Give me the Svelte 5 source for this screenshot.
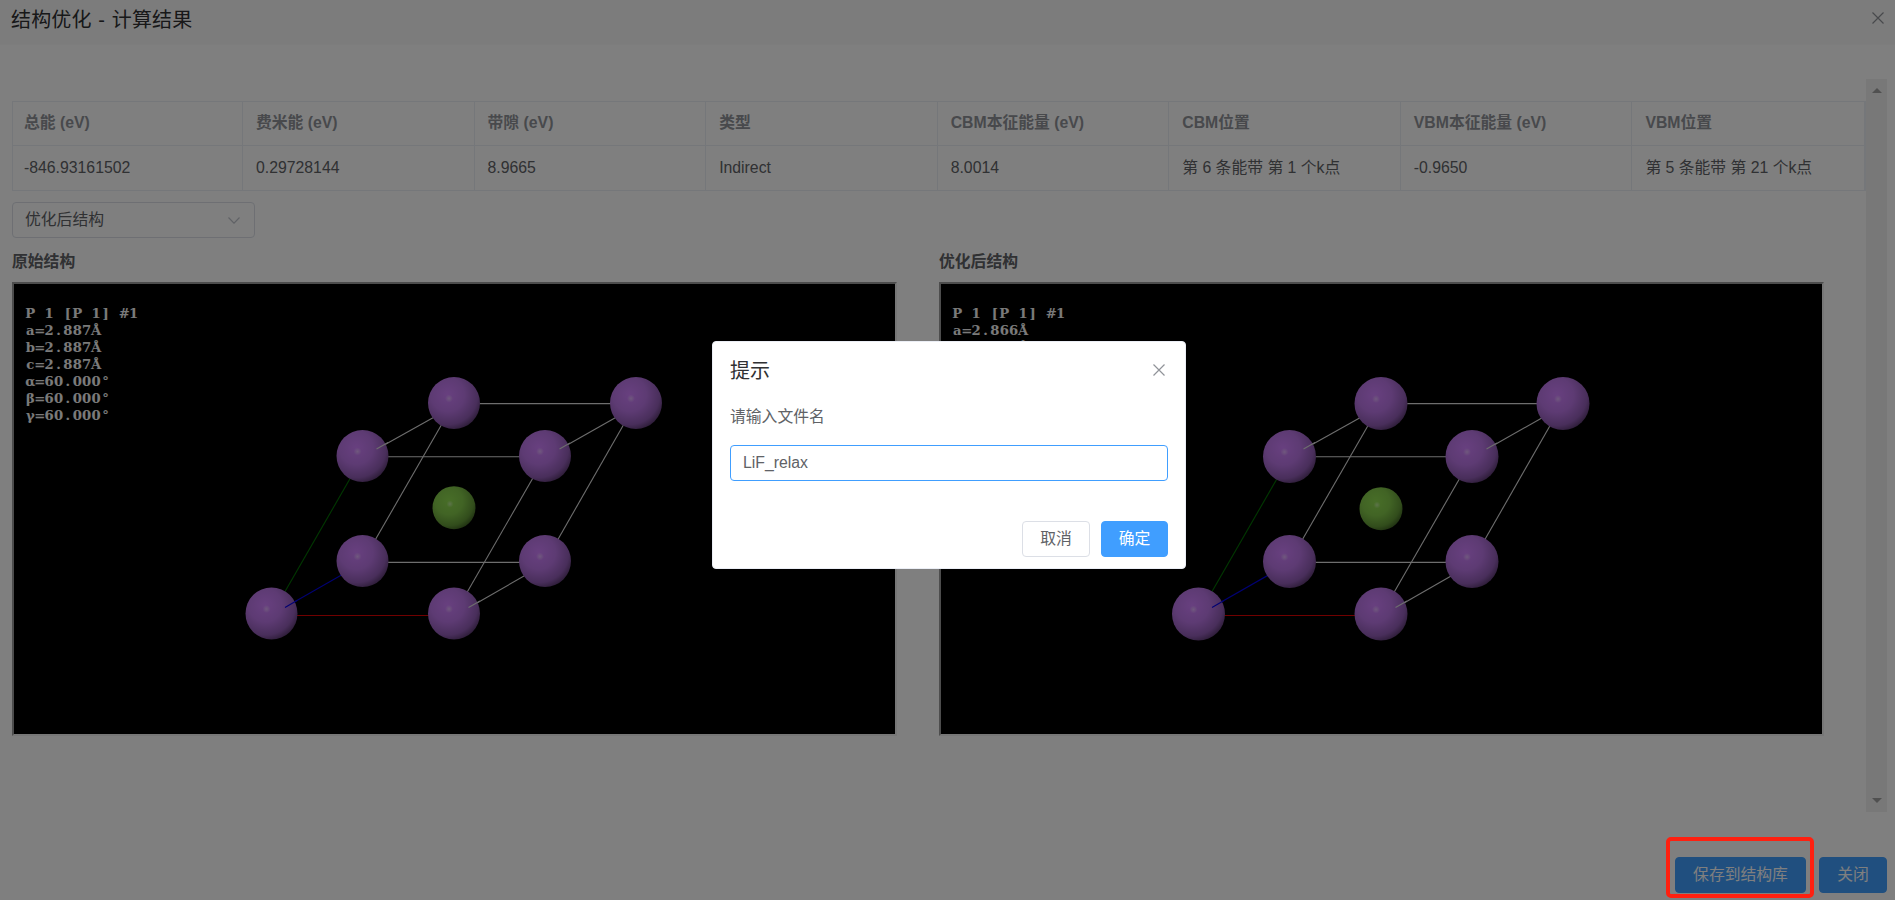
<script>
  const columns = [
    ['总能 (eV)', '-846.93161502'],
    ['费米能 (eV)', '0.29728144'],
    ['带隙 (eV)', '8.9665'],
    ['类型', 'Indirect'],
    ['CBM本征能量 (eV)', '8.0014'],
    ['CBM位置', '第 6 条能带 第 1 个k点'],
    ['VBM本征能量 (eV)', '-0.9650'],
    ['VBM位置', '第 5 条能带 第 21 个k点'],
  ];

  const viewers = [
    { title: '原始结构', length: '2.887', r: 26, dy: 0 },
    { title: '优化后结构', length: '2.866', r: 26.5, dy: 0.5 },
  ];

  const cellInfo = (length) => [
    'P 1 [P 1] #1',
    `a=${length}Å`,
    `b=${length}Å`,
    `c=${length}Å`,
    'α=60.000°',
    'β=60.000°',
    'γ=60.000°',
  ];

  // Centre of every character cell, for fixed-pitch lettering.
  const pitch = (line) => [...line].map((_, i) => (16.3 + i * 9.4).toFixed(1)).join(' ');

  // Corner atoms, in viewer coordinates.
  const atoms = [
    [440, 119], [622, 119], [348.5, 172], [531, 172],
    [348.5, 277], [531, 277], [257.5, 329.5], [440, 329.5],
  ];
  const backEdges = [
    [440, 119.6, 622, 119.6], [348.5, 172.7, 531, 172.7],
    [348.5, 278.4, 531, 278.4],
    [440, 119, 348.5, 278], [622, 119, 531, 278],
    [531, 173, 440, 331],
    [364, 164.5, 440, 122], [547, 164.5, 622, 122], [456, 323, 531, 280],
  ];

  let fileName = $state('LiF_relax');
</script>

<div class="page">
  <header>
    <h1>结构优化 - 计算结果</h1>
    <svg class="close" viewBox="0 0 12 12"><path d="M.5.5l11 11M11.5.5l-11 11" /></svg>
  </header>
  <main>
    <div class="content">
      <table>
        <thead><tr>{#each columns as c}<th>{c[0]}</th>{/each}</tr></thead>
        <tbody><tr>{#each columns as c}<td>{c[1]}</td>{/each}</tr></tbody>
      </table>
      <div class="select">
        <span>优化后结构</span>
        <svg viewBox="0 0 12 7"><path d="M.5.5L6 6.2 11.5.5" /></svg>
      </div>
      <div class="viewers">
        {#each viewers as v, i}
          <section>
            <h2>{v.title}</h2>
            <div class="frame">
              <svg class="scene" viewBox="0 0 881 450">
                <defs>
                  <radialGradient id="li{i}" cx=".38" cy=".34" r=".72">
                    <stop offset="0" stop-color="#d080ff" />
                    <stop offset=".45" stop-color="#bb76e7" />
                    <stop offset=".8" stop-color="#925db6" />
                    <stop offset="1" stop-color="#553669" />
                  </radialGradient>
                  <radialGradient id="f{i}" cx=".38" cy=".34" r=".72">
                    <stop offset="0" stop-color="#90dc50" />
                    <stop offset=".45" stop-color="#83c84a" />
                    <stop offset=".8" stop-color="#649a38" />
                    <stop offset="1" stop-color="#3c5d22" />
                  </radialGradient>
                  <radialGradient id="shine{i}">
                    <stop offset="0" stop-color="#fff" stop-opacity=".4" />
                    <stop offset="1" stop-color="#fff" stop-opacity="0" />
                  </radialGradient>
                </defs>
                <g class="info">
                  {#each cellInfo(v.length) as line, n}
                    <text x={pitch(line)} y={34.3 + n * 16.9}>{line}</text>
                  {/each}
                </g>
                <g class="edges">
                  {#each backEdges as e}<line x1={e[0]} y1={e[1]} x2={e[2]} y2={e[3]} />{/each}
                  <line class="green" x1="257.5" y1="331" x2="348.5" y2="173" />
                  <line class="red" x1="257.5" y1="331.5" x2="440" y2="331.5" />
                  <line class="blue" x1="257.5" y1="331" x2="348.5" y2="279" />
                </g>
                <g transform="translate(0 {v.dy})">
                  {#each atoms as a}
                    <circle cx={a[0]} cy={a[1]} r={v.r} fill="url(#li{i})" />
                    <circle cx={a[0] - 5} cy={a[1] - 4.5} r="4" fill="url(#shine{i})" />
                  {/each}
                  <circle cx="440" cy={223.7 + v.dy} r="21.5" fill="url(#f{i})" />
                  <circle cx="436" cy={220 + v.dy} r="3.5" fill="url(#shine{i})" />
                </g>
                <g class="edges">
                  <line x1="362.5" y1="165" x2="374" y2="158.5" />
                  <line x1="545.5" y1="165" x2="556" y2="159" />
                  <line x1="454.5" y1="323.5" x2="466" y2="317" />
                  <line class="blue" x1="271" y1="323.5" x2="283" y2="316.5" />
                </g>
              </svg>
            </div>
          </section>
        {/each}
      </div>
    </div>
    <div class="scrollbar"><i class="up"></i><i class="down"></i></div>
  </main>
  <footer>
    <button class="primary save">保存到结构库</button>
    <button class="primary">关闭</button>
  </footer>
</div>

<div class="mask">
  <div class="dialog">
    <div class="head">
      <h3>提示</h3>
      <svg class="close" viewBox="0 0 12 12"><path d="M.5.5l11 11M11.5.5l-11 11" /></svg>
    </div>
    <p>请输入文件名</p>
    <input bind:value={fileName} />
    <div class="actions">
      <button>取消</button>
      <button class="primary confirm">确定</button>
    </div>
  </div>
</div>
<div class="highlight"></div>

<style>
  :global(body) {
    font: 15.8px/24px "Liberation Sans", "Noto Sans CJK SC", sans-serif;
    color: #606266;
    overflow: hidden;
  }
  * { box-sizing: border-box; margin: 0; }
  .page { height: 900px; display: flex; flex-direction: column; background: #fff; }
  header {
    flex: none;
    height: 45px;
    display: flex;
    justify-content: space-between;
    padding: 7px 11px 0;
    background: #f8f8f8;
    border-bottom: 1px solid #fafafa;
  }
  h1, h3 { font-size: 20px; line-height: 26px; font-weight: 400; color: #303133; }
  h1 { letter-spacing: .15px; word-spacing: 1px; }
  .close { width: 12px; height: 12px; fill: none; stroke: #909399; stroke-width: 1.2; }
  header .close { margin: 5px 0 0; }
  main { height: 733px; flex: none; margin: 34px 8px 0 12px; display: flex; }
  .content { width: 1854px; flex: none; padding-top: 22px; }
  table {
    width: 1854px;
    table-layout: fixed;
    border-collapse: separate;
    border-spacing: 0;
    border: 1px solid #ebeef5;
    border-right-width: 2px;
    border-bottom: 0;
  }
  th, td {
    padding: 0 0 0 13px;
    text-align: left;
    border-right: 1px solid #ebeef5;
    border-bottom: 1px solid #ebeef5;
    white-space: nowrap;
  }
  th:first-child { width: 230px; }
  th:first-child, td:first-child { padding-left: 11px; }
  th:last-child, td:last-child { border-right: 0; }
  th { height: 44px; padding-bottom: 2px; color: #909399; font-weight: 700; }
  td { height: 45px; }
  .select {
    width: 243px;
    height: 36px;
    margin-top: 11px;
    padding: 0 14px 0 12px;
    border: 1px solid #dcdfe6;
    border-radius: 4px;
    display: flex;
    align-items: center;
    justify-content: space-between;
  }
  .select svg { width: 12px; height: 7px; fill: none; stroke: #c0c4cc; stroke-width: 1.2; }
  .viewers { display: flex; }
  section { width: 927px; padding-top: 12px; }
  h2 { font-size: 15.8px; line-height: 24px; font-weight: 700; }
  .frame {
    width: 885px;
    height: 454px;
    margin-top: 8px;
    border: 2px solid;
    border-color: #9a9a9a #eee #eee #9a9a9a;
    background: #000;
  }
  .scene { display: block; width: 881px; height: 450px; }
  .info text {
    font: bold 13.2px "DejaVu Serif", serif;
    fill: #f4f4f4;
    text-anchor: middle;
    white-space: pre;
  }
  .edges line { stroke: #dcdcdc; stroke-width: 1.1; }
  .edges .green { stroke: #007000; }
  .edges .red { stroke: #e00000; }
  .edges .blue { stroke: #0000e8; }
  .scrollbar {
    width: 21px;
    background: #f1f1f1;
    display: flex;
    flex-direction: column;
    justify-content: space-between;
    align-items: center;
    padding: 9px 0;
  }
  .scrollbar i { border: 5px solid transparent; border-top-width: 0; border-bottom: 5px solid #a0a0a0; }
  .scrollbar .down { border-top: 5px solid #a0a0a0; border-bottom: 0; }
  footer { display: flex; justify-content: flex-end; gap: 13px; padding: 45px 8px 0 0; }
  button {
    height: 36px;
    width: 68px;
    padding: 0;
    font: inherit;
    color: #606266;
    background: #fff;
    border: 1px solid #dcdfe6;
    border-radius: 4px;
  }
  .primary { color: #fff; background: #409eff; border-color: #409eff; }
  .save { width: 131px; }
  .confirm { width: 67px; }
  .mask { position: fixed; inset: 0; background: rgba(0, 0, 0, .5); }
  .dialog {
    position: absolute;
    left: 712px;
    top: 341px;
    width: 474px;
    height: 228px;
    padding: 16px 17px 11px;
    border-radius: 4px;
    border: 1px solid #ebeef5;
    background: #fff;
    display: flex;
    flex-direction: column;
  }
  .head { display: flex; justify-content: space-between; }
  .head .close { margin: 6px 3px 0 0; }
  p { margin-top: 21px; }
  input {
    flex: none;
    height: 36px;
    margin-top: 16px;
    padding: 0 12px 1px;
    font: inherit;
    color: #606266;
    border: 1px solid #409eff;
    border-radius: 4px;
    outline: 0;
  }
  .actions { display: flex; justify-content: flex-end; gap: 11px; margin-top: auto; }
  .highlight {
    position: fixed;
    left: 1666px;
    top: 837px;
    width: 148px;
    height: 61px;
    border: 4px solid #ff2010;
    border-radius: 5px;
  }
</style>
